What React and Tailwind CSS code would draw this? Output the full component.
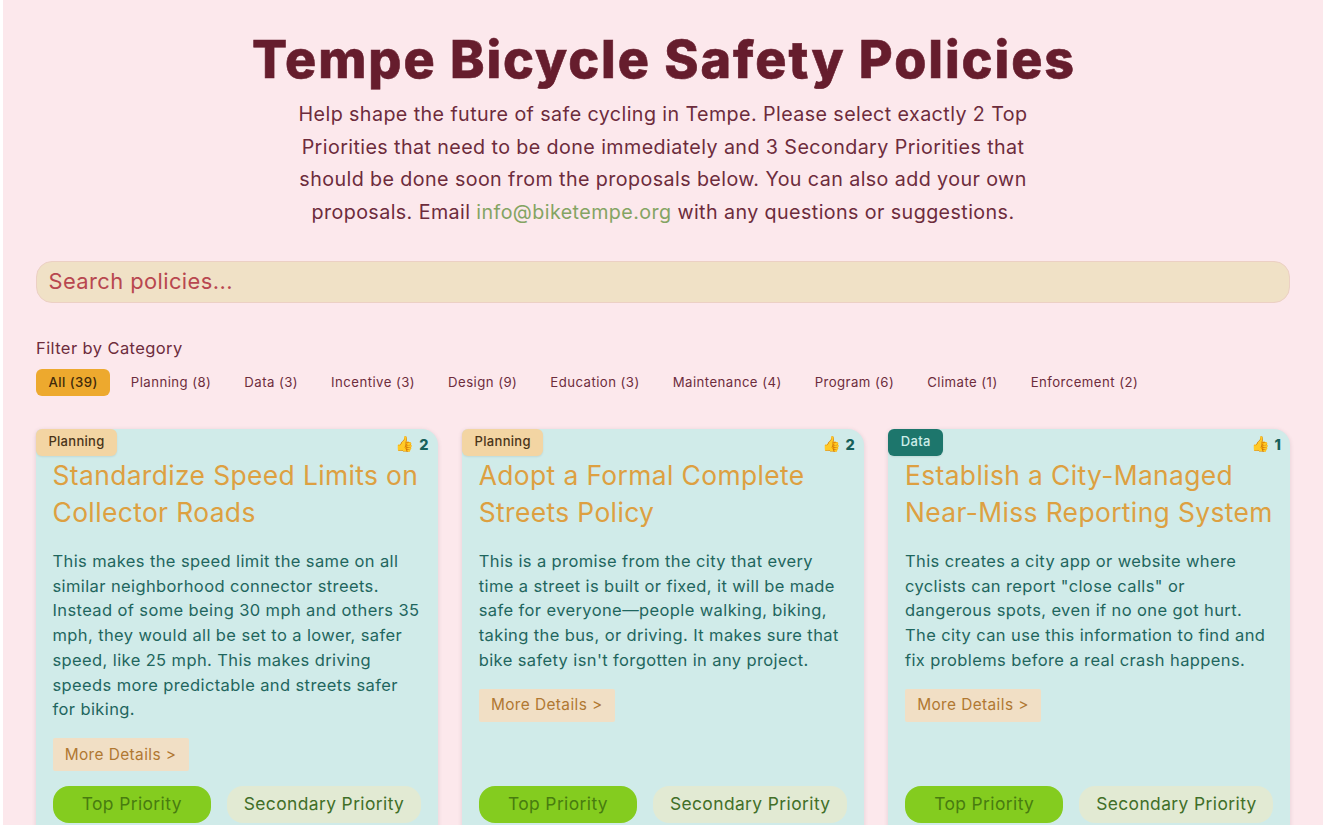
const filters = [
  'All (39)',
  'Planning (8)',
  'Data (3)',
  'Incentive (3)',
  'Design (9)',
  'Education (3)',
  'Maintenance (4)',
  'Program (6)',
  'Climate (1)',
  'Enforcement (2)',
];

const policies = [
  {
    category: 'Planning',
    badge: 'bg-[#f3d5a3] text-[#4a3418]',
    votes: 2,
    title: ['Standardize Speed Limits on', 'Collector Roads'],
    body: [
      'This makes the speed limit the same on all',
      'similar neighborhood connector streets.',
      'Instead of some being 30 mph and others 35',
      'mph, they would all be set to a lower, safer',
      'speed, like 25 mph. This makes driving',
      'speeds more predictable and streets safer',
      'for biking.',
    ],
  },
  {
    category: 'Planning',
    badge: 'bg-[#f3d5a3] text-[#4a3418]',
    votes: 2,
    title: ['Adopt a Formal Complete', 'Streets Policy'],
    body: [
      'This is a promise from the city that every',
      'time a street is built or fixed, it will be made',
      'safe for everyone—people walking, biking,',
      'taking the bus, or driving. It makes sure that',
      "bike safety isn't forgotten in any project.",
    ],
  },
  {
    category: 'Data',
    badge: 'bg-[#1d766c] text-[#cdeeea]',
    votes: 1,
    title: ['Establish a City-Managed', 'Near-Miss Reporting System'],
    body: [
      'This creates a city app or website where',
      'cyclists can report "close calls" or',
      'dangerous spots, even if no one got hurt.',
      'The city can use this information to find and',
      'fix problems before a real crash happens.',
    ],
  },
];

function Lines({ lines }) {
  return lines.map((line) => (
    <span key={line} className="block whitespace-nowrap">
      {line}
    </span>
  ));
}

function PolicyCard({ policy }) {
  return (
    <article className="relative flex h-[430px] flex-col rounded-[16px] rounded-tl-[6px] bg-[#d0ebe9] px-[16.5px] pt-[28px] shadow-[0_1px_4px_rgba(90,60,80,0.16)]">
      <span
        className={`absolute left-0 top-0 flex h-[26.5px] items-center rounded-[6px] px-[12.4px] pb-[2px] text-[13px] font-medium tracking-[0.3px] shadow-[0_1px_2px_rgba(0,0,0,0.08)] ${policy.badge}`}
      >
        {policy.category}
      </span>
      <span className="absolute right-[9px] top-[4px] flex h-[22px] items-center gap-[5px] text-[14.5px] font-extrabold text-[#17605a]">
        <span className="text-[15px] font-normal">👍</span>
        {policy.votes}
      </span>
      <h2 className="text-[26.4px] leading-[37px] tracking-[0.38px] text-[#dda041]">
        <Lines lines={policy.title} />
      </h2>
      <p className="mt-[17.5px] text-[16.5px] leading-[24.75px] tracking-[0.39px] text-[#1f665e]">
        <Lines lines={policy.body} />
      </p>
      <button className="mt-[16px] flex h-[33px] w-[136px] items-center justify-center whitespace-nowrap rounded-[2px] bg-[#f1dfc5] pb-[1px] text-[15.4px] tracking-[0.41px] text-[#b07832]">
        More Details &gt;
      </button>
      <div className="absolute left-[16.5px] right-[16.5px] top-[357px] flex gap-[16px]">
        <button className="h-[37px] w-[158.5px] whitespace-nowrap rounded-[16px] bg-[#84cc1f] pb-[1px] text-[17.4px] tracking-[0.41px] text-[#487c10]">
          Top Priority
        </button>
        <button className="h-[37px] w-[194px] whitespace-nowrap rounded-[16px] bg-[#e2ead3] pb-[1px] text-[17.4px] tracking-[0.41px] text-[#416f28]">
          Secondary Priority
        </button>
      </div>
    </article>
  );
}

export default function App() {
  return (
    <div className="h-[825px] overflow-hidden bg-white px-[3px] font-[Inter,sans-serif]">
      <main className="h-full overflow-hidden bg-[#fce8ec] px-[33px] pt-[28px] text-[#6d2c3c]">
        <header className="text-center">
          <h1 className="whitespace-nowrap pl-[2px] text-[52px] font-extrabold leading-[64px] tracking-[1.93px] text-[#661d2d] [-webkit-text-stroke:0.6px_#661d2d]">
            Tempe Bicycle Safety Policies
          </h1>
          <p className="mt-[6px] whitespace-nowrap text-[19.7px] leading-[32.6px] tracking-[0.41px]">
            Help shape the future of safe cycling in Tempe. Please select exactly 2 Top
            <br />
            Priorities that need to be done immediately and 3 Secondary Priorities that
            <br />
            should be done soon from the proposals below. You can also add your own
            <br />
            proposals. Email <a className="text-[#84a463]">info@biketempe.org</a> with any questions or suggestions.
          </p>
        </header>
        <input
          className="mt-[33px] block h-[42px] w-full rounded-[16px] border border-[#ecd0c4] bg-[#f0e1c6] px-[11.5px] pb-[3px] text-[21.9px] tracking-[0.41px] outline-none placeholder:text-[#b8474f]"
          placeholder="Search policies..."
        />
        <section className="mt-[33px]">
          <h3 className="text-[16.5px] leading-[25px] tracking-[0.41px]">Filter by Category</h3>
          <nav className="mt-[8px] flex gap-[8.2px]">
            {filters.map((filter, i) => (
              <button
                key={filter}
                className={`h-[27px] whitespace-nowrap rounded-[6px] px-[12.4px] text-[13.2px] tracking-[0.45px] ${
                  i === 0 ? 'bg-[#eda92e] font-medium text-[#412a0b]' : ''
                }`}
              >
                {filter}
              </button>
            ))}
          </nav>
        </section>
        <section className="mt-[33px] grid grid-cols-3 gap-[24.7px]">
          {policies.map((policy) => (
            <PolicyCard key={policy.title[0]} policy={policy} />
          ))}
        </section>
      </main>
    </div>
  );
}
